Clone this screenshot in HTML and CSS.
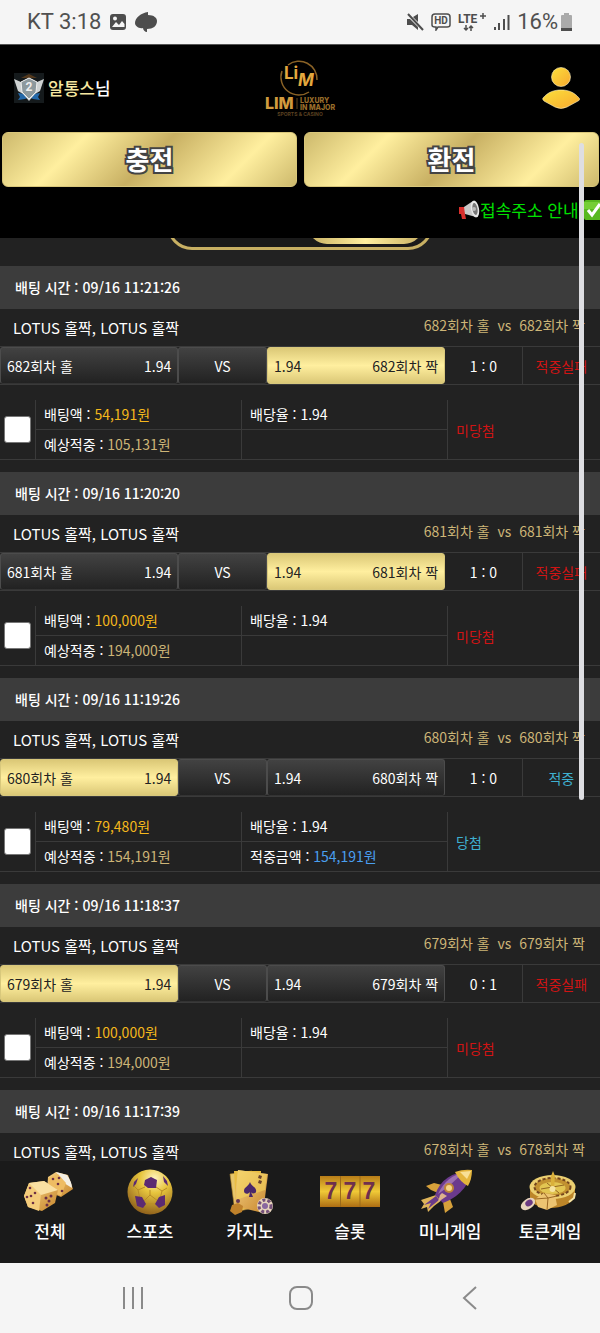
FILE: index.html
```html
<!DOCTYPE html>
<html lang="ko">
<head>
    <meta charset="UTF-8">
    <meta name="viewport" content="width=device-width, initial-scale=1">
    <title>LIM</title>
    <link rel="stylesheet" href="styles.css">
</head>
<body>
    <div class="status">
        <span class="status-text">KT 3:18</span>
        <svg width="18" height="18" viewBox="0 0 18 18"><rect x="1" y="1" width="16" height="16" rx="3" fill="#4d4d4d"/><circle cx="6" cy="5.500" r="2" fill="#f5f5f5"/><path d="M3 14l4-5 3 3 3-4 2.500 3v3z" fill="#f5f5f5"/></svg>
        <svg width="22" height="20" viewBox="0 0 22 20"><path d="M13 0v3c6 0 9 3 9 6 0 5-4 8-10 8v3c-2 0-4-2-4-4-4 1-8-2-8-5C0 6 6 1 13 0z" fill="#4d4d4d"/></svg>
        <div class="status-right">
            <svg width="18" height="18" viewBox="0 0 18 18"><path d="M12 1v8L7 4zM1 6h3l8 8v3l-6-5H1z" fill="#4d4d4d"/><path d="M2 1l15 16" stroke="#4d4d4d" stroke-width="2"/></svg>
            <svg width="20" height="18" viewBox="0 0 20 18"><path d="M4 1h12q3 0 3 3v8q0 2-3 2H7l-2 3v-3H4q-3 0-3-2V4q0-3 3-3z" fill="none" stroke="#4d4d4d" stroke-width="1.500"/><text x="10" y="11" text-anchor="middle" class="svg-hd">HD</text></svg>
            <svg width="28" height="20" viewBox="0 0 28 20"><text x="0" y="11" class="svg-lte">LTE</text><path d="M22 4h6M25 1v6M8 13v5M6 16l2 2 2-2M13 19v-5M11 16l2-2 2 2" fill="none" stroke="#4d4d4d" stroke-width="1.500"/></svg>
            <svg width="17" height="17" viewBox="0 0 17 17"><path d="M2 13v3M6 9v7M11 5v11M15.500 1v15" stroke="#4d4d4d" stroke-width="2"/></svg>
            <span class="status-text">16%</span>
            <svg width="13" height="19" viewBox="0 0 13 19"><path d="M4 0h5v2h2q1 0 1 1v15H1V3q0-1 1-1h2z" fill="#aaa"/><path d="M1 15h11v3H1z" fill="#4d4d4d"/></svg>
        </div>
    </div>

    <header class="header">
        <div class="user">
            <svg width="30" height="30" viewBox="0 0 30 30">
                <rect width="30" height="30" fill="#151a1c"/>
                <path d="M7 5l8-4 8 4" fill="#53381c"/>
                <path d="M4 20l7 1 4 4 4-4 7-1-2 4 2 3-7-1-4-2-4 2-7 1 2-3z" fill="#2468a8"/>
                <path d="M0 6l7 3 8-4 8 4 7-3-4 12-5 3-6 7-6-7-5-3z" fill="#cfd3d3"/>
                <path d="M7 9l8-4 8 4-1 10-7 7-7-7z" fill="#8d999d" stroke="#eee"/>
                <text x="15" y="18" text-anchor="middle" class="svg-level">2</text>
            </svg>
            <span><span class="user-name">알통스</span>님</span>
        </div>
        <a href="#" class="logo" aria-label="LIM">
            <svg width="72" height="60" viewBox="0 0 72 60">
                <path d="M24 7a18 18 0 0 1 29 15M18 13a18 18 0 0 0 27 21" fill="none" stroke="#8a6226" stroke-width="1.500"/>
                <text x="20" y="21" class="logo-mark">Li</text>
                <text x="34" y="28" class="logo-mark logo-m">M</text>
                <text x="1" y="51" class="logo-name">LIM</text>
                <path d="M33 40v11" stroke="#5d421e"/>
                <text x="36" y="45" class="logo-small">LUXURY</text>
                <text x="36" y="52" class="logo-small">IN MAJOR</text>
                <text x="36" y="58" text-anchor="middle" class="logo-tiny">SPORTS &amp; CASINO</text>
            </svg>
        </a>
        <button class="profile" aria-label="내 정보">
            <svg width="38" height="42" viewBox="0 0 38 42">
                <defs><linearGradient id="gold" x1="0" y1="0" x2="1" y2="1"><stop offset="0" stop-color="#fbe03c"/><stop offset="1" stop-color="#f9a82e"/></linearGradient></defs>
                <circle cx="19" cy="10" r="9.500" fill="url(#gold)" stroke="#fff3c4" stroke-width=".6"/>
                <path d="M1 31C6 25 12 23 19 23s13 2 18 8c1 1 1 2-1 3l-11 6q-6 3-12 0L2 34q-2-2-1-3z" fill="url(#gold)" stroke="#fff3c4" stroke-width=".6"/>
            </svg>
        </button>
    </header>

    <div class="cash">
        <button class="cash-btn">충전</button>
        <button class="cash-btn">환전</button>
    </div>

    <div class="notice">
        <svg width="21" height="20" viewBox="0 0 21 20"><path d="M0 7h6v7l1 5H3l-1-5H0z" fill="#d92f2c"/><path d="M5 7l9-6 3 16-11-3z" fill="#c9c9c9"/><ellipse cx="16" cy="9" rx="4" ry="8.500" fill="#e7e7e7" transform="rotate(-10 16 9)"/><ellipse cx="16" cy="9" rx="2.500" ry="6" fill="#777" transform="rotate(-10 16 9)"/><circle cx="15" cy="9" r="2" fill="#bbb"/></svg>
        <span>접속주소 안내</span>
        <svg class="notice-check" width="20" height="20" viewBox="0 0 20 20"><rect width="20" height="20" rx="2" fill="#58b820"/><path d="M0 2h20v7H0z" fill="#75ce35"/><path d="M4 10l4 5 8-11" fill="none" stroke="#fff" stroke-width="3"/></svg>
    </div>

    <main class="history">
        <div class="tabs">
            <button class="tab" aria-label="진행"></button>
            <button class="tab active" aria-label="완료"></button>
        </div>

        <section class="bet">
            <h2 class="bet-time">배팅 시간 : 09/16 11:21:26</h2>
            <div class="bet-names"><span class="league">LOTUS 홀짝, LOTUS 홀짝</span><span class="match">682회차 홀 &nbsp;vs&nbsp; 682회차 짝</span></div>
            <table class="odds">
                <tr>
                    <td class="pick"><div class="cell"><span>682회차 홀</span><span>1.94</span></div></td>
                    <td class="vs"><div class="cell">VS</div></td>
                    <td class="pick"><div class="cell on"><span>1.94</span><span>682회차 짝</span></div></td>
                    <td class="score">1 : 0</td>
                    <td class="result lose">적중실패</td>
                </tr>
            </table>
            <div class="info">
                <label class="check"><input type="checkbox" aria-label="682회차 선택"></label>
                <div class="item">배팅액 : <span class="stake">54,191원</span></div>
                <div class="item">배당율 : 1.94</div>
                <div class="item last">예상적중 : <span class="expect">105,131원</span></div>
                <div class="item last"></div>
                <div class="outcome lose">미당첨</div>
            </div>
        </section>

        <section class="bet">
            <h2 class="bet-time">배팅 시간 : 09/16 11:20:20</h2>
            <div class="bet-names"><span class="league">LOTUS 홀짝, LOTUS 홀짝</span><span class="match">681회차 홀 &nbsp;vs&nbsp; 681회차 짝</span></div>
            <table class="odds">
                <tr>
                    <td class="pick"><div class="cell"><span>681회차 홀</span><span>1.94</span></div></td>
                    <td class="vs"><div class="cell">VS</div></td>
                    <td class="pick"><div class="cell on"><span>1.94</span><span>681회차 짝</span></div></td>
                    <td class="score">1 : 0</td>
                    <td class="result lose">적중실패</td>
                </tr>
            </table>
            <div class="info">
                <label class="check"><input type="checkbox" aria-label="681회차 선택"></label>
                <div class="item">배팅액 : <span class="stake">100,000원</span></div>
                <div class="item">배당율 : 1.94</div>
                <div class="item last">예상적중 : <span class="expect">194,000원</span></div>
                <div class="item last"></div>
                <div class="outcome lose">미당첨</div>
            </div>
        </section>

        <section class="bet">
            <h2 class="bet-time">배팅 시간 : 09/16 11:19:26</h2>
            <div class="bet-names"><span class="league">LOTUS 홀짝, LOTUS 홀짝</span><span class="match">680회차 홀 &nbsp;vs&nbsp; 680회차 짝</span></div>
            <table class="odds">
                <tr>
                    <td class="pick"><div class="cell on"><span>680회차 홀</span><span>1.94</span></div></td>
                    <td class="vs"><div class="cell">VS</div></td>
                    <td class="pick"><div class="cell"><span>1.94</span><span>680회차 짝</span></div></td>
                    <td class="score">1 : 0</td>
                    <td class="result win">적중</td>
                </tr>
            </table>
            <div class="info">
                <label class="check"><input type="checkbox" aria-label="680회차 선택"></label>
                <div class="item">배팅액 : <span class="stake">79,480원</span></div>
                <div class="item">배당율 : 1.94</div>
                <div class="item last">예상적중 : <span class="expect">154,191원</span></div>
                <div class="item last">적중금액 : <span class="paid">154,191원</span></div>
                <div class="outcome win">당첨</div>
            </div>
        </section>

        <section class="bet">
            <h2 class="bet-time">배팅 시간 : 09/16 11:18:37</h2>
            <div class="bet-names"><span class="league">LOTUS 홀짝, LOTUS 홀짝</span><span class="match">679회차 홀 &nbsp;vs&nbsp; 679회차 짝</span></div>
            <table class="odds">
                <tr>
                    <td class="pick"><div class="cell on"><span>679회차 홀</span><span>1.94</span></div></td>
                    <td class="vs"><div class="cell">VS</div></td>
                    <td class="pick"><div class="cell"><span>1.94</span><span>679회차 짝</span></div></td>
                    <td class="score">0 : 1</td>
                    <td class="result lose">적중실패</td>
                </tr>
            </table>
            <div class="info">
                <label class="check"><input type="checkbox" aria-label="679회차 선택"></label>
                <div class="item">배팅액 : <span class="stake">100,000원</span></div>
                <div class="item">배당율 : 1.94</div>
                <div class="item last">예상적중 : <span class="expect">194,000원</span></div>
                <div class="item last"></div>
                <div class="outcome lose">미당첨</div>
            </div>
        </section>

        <section class="bet">
            <h2 class="bet-time">배팅 시간 : 09/16 11:17:39</h2>
            <div class="bet-names"><span class="league">LOTUS 홀짝, LOTUS 홀짝</span><span class="match">678회차 홀 &nbsp;vs&nbsp; 678회차 짝</span></div>
        </section>
    </main>

    <nav class="menu">
        <a href="#">
            <svg width="60" height="46" viewBox="0 0 60 46">
                <defs><linearGradient id="die" x1="0" y1="0" x2="1" y2="1"><stop offset="0" stop-color="#f6d489"/><stop offset="1" stop-color="#c8862b"/></linearGradient></defs>
                <path d="M36 3l12 3 5 14-12 8-14-6 1-14z" fill="url(#die)"/><path d="M36 3l11 3q5 7 5 13l-8-5z" fill="#f4efe4"/>
                <path d="M28 9l10-4 8 9-5 13-11-5z" fill="#eebc63"/>
                <path d="M9 14l15-2 14 9-3 13-13 8-14-4-4-11z" fill="url(#die)"/>
                <path d="M9 14l12 11-2 17-11-4-4-11z" fill="#f4cc7b"/><path d="M9 14l15-2 14 9-17 5z" fill="#fae0a2"/>
                <g fill="#6d3045"><circle cx="33" cy="10" r="1.300"/><circle cx="39" cy="9" r="1.300"/><circle cx="38" cy="15" r="1.300"/><circle cx="42" cy="22" r="1.300"/><circle cx="10" cy="19" r="1.300"/><circle cx="15" cy="24" r="1.300"/><circle cx="11" cy="27" r="1.300"/><circle cx="7" cy="28" r="1.300"/><circle cx="13" cy="34" r="1.300"/><circle cx="26" cy="29" r="1.500"/><circle cx="29" cy="32" r="1.500"/><circle cx="31" cy="27" r="1.500"/><circle cx="27" cy="36" r="1.500"/></g>
            </svg>
            전체
        </a>
        <a href="#">
            <svg width="60" height="46" viewBox="0 0 60 46">
                <defs><radialGradient id="ball" cx=".6" cy=".2" r=".8"><stop offset="0" stop-color="#fff3be"/><stop offset=".4" stop-color="#e7c53d"/><stop offset="1" stop-color="#92641d"/></radialGradient></defs>
                <circle cx="30" cy="23" r="22.500" fill="url(#ball)"/>
                <path d="M25 18l-7 3-4-4M36 18l6 4 5-3M18 21l2 9M42 22l-2 8M25 35h11M30 21v5M30 26l-6 6M30 26l8 6" fill="none" stroke="#b98d26"/>
                <path d="M25 11l6-3 6 3-1 8h-8l-4-3zM15 27l7 1 4 7-3 4-6-2zM45 26l-6 2-4 7 4 4 6-3zM14 13l4-4-2 6-3 3zM43 7l4 5 1 5-4-4z" fill="#5b2a72"/>
            </svg>
            스포츠
        </a>
        <a href="#">
            <svg width="60" height="46" viewBox="0 0 60 46">
                <path d="M10 5l22-3 5 36-22 5z" fill="#e7c66b" stroke="#b3862c" stroke-width=".6"/>
                <path d="M14 2h27l-1 38H16z" fill="#e9bd42"/><path d="M18 1l30 4-5 39-29-7z" fill="url(#die)"/><path d="M18 1l29 4-2 16-29 10z" fill="#f3d45b" opacity=".6"/>
                <path d="M30 13c-2 5-6 5-6 9 0 3 4 4 6 1l-1 5h4l-2-5c2 3 6 1 5-2 0-3-5-4-6-8z" fill="#4a286a"/>
                <path d="M39 6l3 1-1 3-3-1zM39 11l3 1-1 3-3-1z" fill="#68412b"/>
                <path d="M12 36l6-2 5 3-1 6-7 3-5-4z" fill="#bf812b"/><circle cx="18" cy="32" r="2" fill="#633655"/>
                <circle cx="45" cy="37" r="8" fill="#e7d4bd"/><circle cx="45" cy="37" r="6" fill="none" stroke="#75517a" stroke-width="3" stroke-dasharray="3 2"/><circle cx="45" cy="37" r="3" fill="#8967a0"/>
            </svg>
            카지노
        </a>
        <a href="#">
            <svg width="60" height="46" viewBox="0 0 60 46">
                <defs><linearGradient id="reel" x1="0" y1="0" x2="0" y2="1"><stop offset="0" stop-color="#b77c18"/><stop offset=".5" stop-color="#f0c937"/><stop offset="1" stop-color="#ad6d13"/></linearGradient></defs>
                <rect y="7" width="60" height="31" fill="url(#reel)"/><path d="M20.500 7v31M40 7v31" stroke="#9c6a1a"/>
                <g class="svg-seven"><text x="11" y="30" text-anchor="middle">7</text><text x="30" y="30" text-anchor="middle">7</text><text x="49" y="30" text-anchor="middle">7</text></g>
            </svg>
            슬롯
        </a>
        <a href="#">
            <svg width="60" height="46" viewBox="0 0 60 46">
                <path d="M18 24l-7-3-5-4 8-3 12 3zM30 30l3 8-8 6-2-11z" fill="#d7a13b"/>
                <path d="M16 26L1 31l3 4-3 5 6-2 1 5 6-6 8-6z" fill="#dfb55a"/><path d="M16 27L4 36l7-2-3 6 11-9z" fill="#6a3b8a"/>
                <path d="M15 26C20 11 32 3 50 2c1 10-8 25-27 32z" fill="#6b3a8d"/><path d="M18 25C24 12 33 6 44 3L28 18z" fill="#9d70b0"/>
                <path d="M35 3q8-3 17-2 0 9-4 16-8-4-13-14z" fill="#e4b53d"/><path d="M40 3l11-1-4 8z" fill="#f8e096"/>
                <circle cx="29" cy="19" r="5" fill="#be8438"/><circle cx="29" cy="19" r="3" fill="#f5d489"/><path d="M22 24l5 3-9 6 2-7z" fill="#ddb38c"/>
            </svg>
            미니게임
        </a>
        <a href="#">
            <svg width="60" height="46" viewBox="0 0 60 46">
                <path d="M10 17v13c5 13 40 12 45-3V16z" fill="#bd8629"/><ellipse cx="32.500" cy="18" rx="23" ry="12" fill="#ecd071"/>
                <ellipse cx="32.500" cy="18" rx="18" ry="9" fill="#c29131" stroke="#74451e" stroke-width="2" stroke-dasharray="3 2"/>
                <ellipse cx="32.500" cy="19" rx="13" ry="6" fill="#e2c552"/><path d="M21 20l23-4M27 14l12 10" stroke="#936521"/>
                <path d="M31 7l2-5 2 5-1 14h-3z" fill="#dab03b"/><circle cx="32.500" cy="20" r="3" fill="#f5e3a1"/>
                <path d="M15 30l9-6 11 2 2 10-10 5-9-3z" fill="#edc471"/><path d="M24 24l4 5-1 12M15 30l13-1 9-2" fill="none" stroke="#9a6723"/>
                <ellipse cx="8" cy="35" rx="8" ry="5" fill="#e7d4bd" transform="rotate(-35 8 35)"/><ellipse cx="9" cy="34" rx="4" ry="3" fill="#6b3a83" transform="rotate(-35 9 34)"/><path d="M49 33l5-4 1-5" fill="none" stroke="#f5e4a6" stroke-width="2"/>
            </svg>
            토큰게임
        </a>
    </nav>

    <div class="navbar">
        <button aria-label="최근 앱"><svg width="26" height="26" viewBox="0 0 26 26"><path d="M4 2v22M13 2v22M22 2v22"/></svg></button>
        <button aria-label="홈"><svg width="26" height="26" viewBox="0 0 26 26"><rect x="3" y="2" width="22" height="22" rx="7"/></svg></button>
        <button aria-label="뒤로"><svg width="26" height="26" viewBox="0 0 26 26"><path d="M22 2L10 13l12 11"/></svg></button>
    </div>

    <div class="scrollbar"></div>
</body>
</html>
```
FILE: styles.css
```css
* {
    box-sizing: border-box;
}

body {
    display: flex;
    flex-direction: column;
    position: relative;
    height: 100vh;
    margin: 0;
    overflow: hidden;
    background-color: #222;
    color: #fff;
    font-family: "Noto Sans CJK KR", sans-serif;
    font-size: 14px;
    line-height: 22px;
}

button {
    border: 0;
    padding: 0;
    background: none;
    font-family: inherit;
}

svg {
    display: block;
    flex: none;
}

/* phone status bar */
.status {
    display: flex;
    align-items: center;
    gap: 8px;
    flex: none;
    height: 45px;
    padding: 0 27px;
    background-color: #f5f5f5;
    border-bottom: 1px solid #555;
    color: #505050;
    font-family: Roboto, sans-serif;
}

.status-text {
    font-size: 22px;
}

.status-right {
    display: flex;
    align-items: center;
    gap: 7px;
    margin-left: auto;
}

.status-right .status-text + svg {
    margin-left: -5px;
}

.svg-hd {
    font: bold 10px Roboto, sans-serif;
    fill: #4d4d4d;
}

.svg-lte {
    font: bold 12px Roboto, sans-serif;
    fill: #4d4d4d;
}

/* header */
.header {
    display: grid;
    grid-template-columns: 1fr auto 1fr;
    align-items: center;
    flex: none;
    height: 87px;
    padding: 0 14px 2px;
    background-color: #000;
}

.user {
    display: flex;
    align-items: center;
    gap: 4px;
    font-size: 17px;
    font-weight: 500;
}

.user-name {
    color: #f7e7a0;
}

.svg-level {
    font: bold 12px Roboto, sans-serif;
    fill: #eee;
}

.logo-mark {
    font: bold 17px Inter, sans-serif;
    fill: #e4a83e;
}

.logo-m {
    font-style: italic;
}

.logo-name {
    font: 800 16px Inter, sans-serif;
    fill: #d19a3e;
}

.logo-small {
    font: 800 7px Inter, sans-serif;
    fill: #9a6d2a;
}

.logo-tiny {
    font: bold 5px Inter, sans-serif;
    fill: #5a4120;
}

.profile {
    justify-self: end;
    margin-right: 6px;
}

.cash {
    display: grid;
    grid-template-columns: 1fr 1fr;
    gap: 7px;
    flex: none;
    padding: 0 1px 0 2px;
    background-color: #000;
}

.cash-btn {
    height: 55px;
    padding-bottom: 2px;
    border-radius: 6px;
    border: 1px solid #d8c67a;
    background: linear-gradient(135deg, #cdb96c 0%, #ffef9f 25%, #c8b063 50%, #ffef9f 78%, #cdb96c 100%);
    color: #fff;
    font-size: 26px;
    font-weight: bold;
    line-height: 36px;
    -webkit-text-stroke: 4px #444;
    paint-order: stroke fill;
}

.notice {
    display: flex;
    align-items: center;
    flex: none;
    height: 51px;
    padding: 0 0 5px 76.5%;
    overflow: hidden;
    background-color: #000;
    color: #00e000;
    font-size: 17px;
    white-space: nowrap;
}

.notice-check {
    margin-left: 5px;
}

/* bet history */
.history {
    flex: 1;
    min-height: 0;
    overflow: hidden;
}

.tabs {
    display: grid;
    grid-template-columns: 1fr 1fr;
    gap: 16px;
    width: 266px;
    height: 50px;
    margin: -38px auto 16px;
    padding: 3px 7px;
    border: 3px solid #c8b063;
    border-radius: 25px;
    background-color: #1a1a1a;
}

.tab {
    border-radius: 19px;
}

.tab.active {
    background: linear-gradient(90deg, #c8b063, #ffef9f 50%, #c8b063);
}

.bet {
    padding-bottom: 12px;
}

.bet-time {
    margin: 0;
    padding: 10px 15px 11px;
    background-color: #3c3c3c;
    font-size: 14px;
    font-weight: 500;
}

.bet-names {
    display: flex;
    justify-content: space-between;
    height: 37px;
    padding: 8px 15px 0 13px;
}

.league {
    font-size: 15px;
}

.match {
    margin-top: -3px;
    color: #cdb577;
}

.odds {
    width: 100%;
    table-layout: fixed;
    border-collapse: separate;
    border-spacing: 0;
    border-top: 1px solid #3a3a3a;
    border-bottom: 1px solid #3a3a3a;
}

.odds td {
    height: 37px;
    padding: 0;
    text-align: center;
}

.odds .pick {
    width: 29.7%;
}

.odds .vs {
    width: 14.8%;
}

.odds .score {
    border-right: 1px solid #3a3a3a;
    width: 12.9%;
}

.cell {
    display: flex;
    justify-content: space-between;
    align-items: center;
    height: 37px;
    padding: 0 6px;
    border: 1px solid #4c4c4c;
    border-bottom-color: #333;
    border-radius: 3px;
    background: linear-gradient(#424242, #222);
}

.vs .cell {
    justify-content: center;
}

.cell.on {
    border-color: #d8c87c;
    background: linear-gradient(#dbc877, #ffef9f 50%, #dbc877);
    color: #222;
}

.info {
    display: grid;
    grid-template-columns: 36px 1fr 1fr 152px;
    grid-template-rows: 30px 29px;
    margin-top: 15px;
    border-bottom: 1px solid #3a3a3a;
}

.check {
    display: flex;
    align-items: center;
    grid-row: span 2;
    padding-left: 4px;
    border-right: 1px solid #3a3a3a;
}

.check input {
    appearance: none;
    width: 27px;
    height: 27px;
    margin: 0;
    border: 1px solid #777;
    border-radius: 3px;
    background-color: #fff;
}

.item {
    padding: 3px 8px;
    border-right: 1px solid #3a3a3a;
    border-bottom: 1px solid #3a3a3a;
}

.item.last {
    border-bottom: 0;
}

.outcome {
    grid-column: 4;
    grid-row: 1 / span 2;
    align-self: center;
    padding-left: 8px;
}

.stake {
    color: #f5b81c;
}

.expect {
    color: #cdb577;
}

.paid {
    color: #4a9ff0;
}

.lose {
    color: #d01414;
}

.win {
    color: #3fb0d0;
}

/* bottom menu */
.menu {
    display: grid;
    grid-template-columns: repeat(6, 1fr);
    flex: none;
    height: 102px;
    padding-top: 8px;
    background-color: #1a1a1a;
}

.menu a {
    display: flex;
    flex-direction: column;
    align-items: center;
    gap: 5px;
    color: #fff;
    font-size: 17px;
    font-weight: 500;
    text-decoration: none;
}

.svg-seven {
    font: bold 23px "Liberation Sans", sans-serif;
    fill: #6f304d;
}

.navbar {
    display: flex;
    justify-content: space-around;
    align-items: center;
    flex: none;
    height: 70px;
    padding: 0 49px;
    background-color: #f5f5f5;
}

.navbar svg {
    fill: none;
    stroke: #8a8a8a;
    stroke-width: 2;
}

.scrollbar {
    position: absolute;
    top: 143px;
    right: 16px;
    width: 5px;
    height: 657px;
    border-radius: 3px;
    background-color: #dedee2;
}
```
